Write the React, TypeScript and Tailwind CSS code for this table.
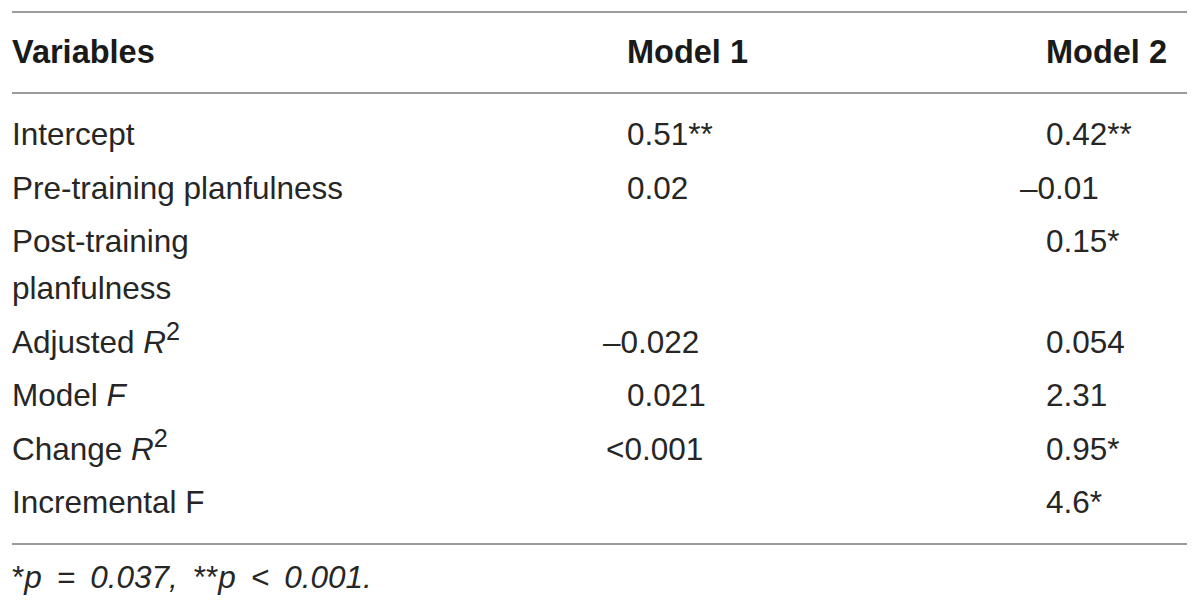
import React from 'react';

type Row = {
  label: React.ReactNode;
  m1?: React.ReactNode;
  m2?: React.ReactNode;
};

const R2 = (
  <>
    <i>R</i>
    <sup className="text-[80%]">2</sup>
  </>
);

const rows: Row[] = [
  { label: 'Intercept', m1: '0.51**', m2: '0.42**' },
  { label: 'Pre-training planfulness', m1: '0.02', m2: <span className="-ml-[26px]">–0.01</span> },
  { label: <>Post-training<br />planfulness</>, m2: '0.15*' },
  { label: <>Adjusted {R2}</>, m1: <span className="-ml-[24px]">–0.022</span>, m2: '0.054' },
  { label: <>Model <i>F</i></>, m1: '0.021', m2: '2.31' },
  { label: <>Change {R2}</>, m1: <span className="-ml-[21px]">&lt;0.001</span>, m2: '0.95*' },
  { label: 'Incremental F', m2: '4.6*' },
];

export default function App() {
  return (
    <div className="w-[1200px] h-[606px] bg-white text-[#262626] overflow-hidden" style={{ fontFamily: '"Liberation Sans", Arial, sans-serif' }}>
      <div className="ml-[12px] mt-[11px] w-[1175px]">
        {/* header */}
        <div className="grid grid-cols-[615px_419px_141px] border-t-2 border-b-2 border-[#9b9b9b] py-[16px] text-[32.5px] leading-[47px] font-bold text-[#1a1a1a]">
          <div>Variables</div>
          <div>Model 1</div>
          <div>Model 2</div>
        </div>

        {/* body */}
        <div className="pt-[14px] pb-[13px] border-b-2 border-[#9b9b9b] text-[31.5px] leading-[47px]">
          {rows.map((r, i) => (
            <div key={i} className="grid grid-cols-[615px_419px_141px] py-[3.25px]">
              <div>{r.label}</div>
              <div>{r.m1}</div>
              <div>{r.m2}</div>
            </div>
          ))}
        </div>

        {/* footnote */}
        <div className="pt-[12px] text-[31.5px] leading-[40px] italic">
          <span className="not-italic">*</span>p<span className="mx-[15px]">=</span>0.037,
          <span className="not-italic ml-[16px]">**</span>p<span className="mx-[15px]">&lt;</span>0.001.
        </div>
      </div>
    </div>
  );
}
